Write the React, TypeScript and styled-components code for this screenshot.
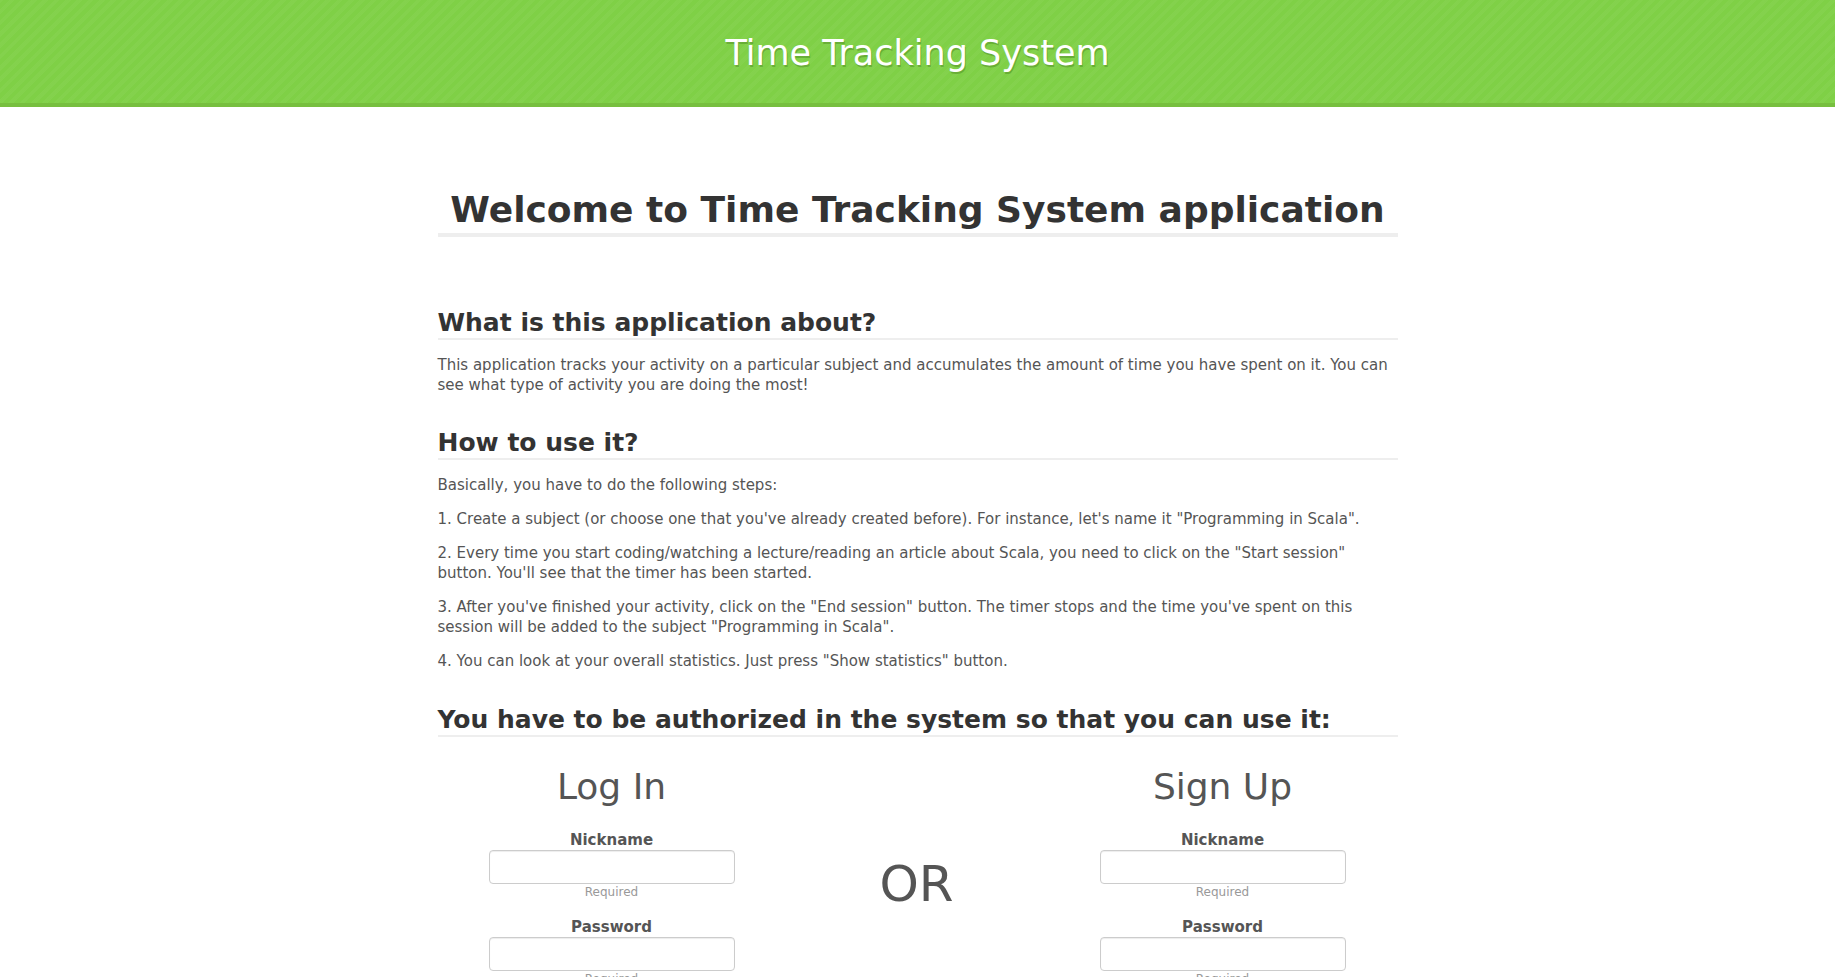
import React from "react";
import styled, { createGlobalStyle } from "styled-components";

const GlobalStyle = createGlobalStyle`
  html, body {
    margin: 0;
    padding: 0;
    background: #ffffff;
  }
  body {
    font-family: "DejaVu Sans", "Liberation Sans", sans-serif;
    font-size: 15px;
    line-height: 20px;
    color: #555555;
  }
  * { box-sizing: border-box; }
`;

const Header = styled.header`
  height: 107px;
  background-color: #7fd046;
  background-image: repeating-linear-gradient(
    -45deg,
    rgba(255, 255, 255, 0.035) 0px,
    rgba(255, 255, 255, 0.035) 4px,
    rgba(0, 0, 0, 0) 4px,
    rgba(0, 0, 0, 0) 8px
  );
  border-bottom: 4px solid #77bf3f;
  display: flex;
  align-items: center;
  justify-content: center;
  padding-top: 3px;
`;

const HeaderTitle = styled.div`
  font-size: 35px;
  line-height: 40px;
  color: #ffffff;
  text-shadow: 1px 2px 0 rgba(60, 110, 20, 0.35);
`;

const Main = styled.main`
  width: 960px;
  margin: 0 auto;
`;

const PageTitle = styled.h1`
  margin: 83px 0 0;
  padding-bottom: 3px;
  font-size: 36px;
  line-height: 40px;
  font-weight: bold;
  color: #333333;
  text-align: center;
  border-bottom: 4px solid #eeeeee;
`;

const SectionTitle = styled.h3<{ $top: number }>`
  margin: ${(p) => p.$top}px 0 15px;
  padding-bottom: 2px;
  font-size: 25px;
  line-height: 26px;
  font-weight: bold;
  color: #333333;
  border-bottom: 2px solid #eeeeee;
`;

const Para = styled.p`
  margin: 0 0 14px;
  font-size: 15px;
  line-height: 20px;
  color: #555555;
`;

const AuthRow = styled.div`
  display: grid;
  grid-template-columns: 348px 1fr 350px;
  margin-top: 30px;
`;

const FormColumn = styled.div`
  display: flex;
  flex-direction: column;
  align-items: center;
`;

const FormTitle = styled.div`
  font-size: 36px;
  line-height: 40px;
  color: #555555;
  margin-bottom: 23px;
`;

const Field = styled.div`
  display: flex;
  flex-direction: column;
  align-items: center;
  margin-bottom: 16px;
`;

const Label = styled.label`
  font-size: 15px;
  line-height: 20px;
  font-weight: bold;
  color: #555555;
`;

const Input = styled.input`
  width: 246px;
  height: 34px;
  padding: 6px 12px;
  border: 1px solid #cccccc;
  border-radius: 4px;
  background: #ffffff;
  box-shadow: inset 0 1px 1px rgba(0, 0, 0, 0.075);
  font-family: inherit;
  font-size: 14px;
  color: #555555;
  outline: none;
`;

const Hint = styled.div`
  font-size: 12px;
  line-height: 17px;
  color: #999999;
`;

const OrColumn = styled.div`
  display: flex;
  justify-content: center;
  padding-top: 88px;
`;

const OrText = styled.div`
  font-size: 50px;
  line-height: 58px;
  color: #555555;
`;

const AuthForm: React.FC<{ title: string }> = ({ title }) => (
  <FormColumn>
    <FormTitle>{title}</FormTitle>
    <Field>
      <Label>Nickname</Label>
      <Input type="text" />
      <Hint>Required</Hint>
    </Field>
    <Field>
      <Label>Password</Label>
      <Input type="password" />
      <Hint>Required</Hint>
    </Field>
  </FormColumn>
);

export default function App() {
  return (
    <>
      <GlobalStyle />
      <Header>
        <HeaderTitle>Time Tracking System</HeaderTitle>
      </Header>
      <Main>
        <PageTitle>Welcome to Time Tracking System application</PageTitle>

        <SectionTitle $top={73}>What is this application about?</SectionTitle>
        <Para>
          This application tracks your activity on a particular subject and accumulates the amount of time you
          have spent on it. You can see what type of activity you are doing the most!
        </Para>

        <SectionTitle $top={35}>How to use it?</SectionTitle>
        <Para>Basically, you have to do the following steps:</Para>
        <Para>
          1. Create a subject (or choose one that you've already created before). For instance, let's name it
          "Programming in Scala".
        </Para>
        <Para>
          2. Every time you start coding/watching a lecture/reading an article about Scala, you need to click on
          the "Start session" button. You'll see that the timer has been started.
        </Para>
        <Para>
          3. After you've finished your activity, click on the "End session" button. The timer stops and the time
          you've spent on this session will be added to the subject "Programming in Scala".
        </Para>
        <Para>4. You can look at your overall statistics. Just press "Show statistics" button.</Para>

        <SectionTitle $top={36}>You have to be authorized in the system so that you can use it:</SectionTitle>

        <AuthRow>
          <AuthForm title="Log In" />
          <OrColumn>
            <OrText>OR</OrText>
          </OrColumn>
          <AuthForm title="Sign Up" />
        </AuthRow>
      </Main>
    </>
  );
}
